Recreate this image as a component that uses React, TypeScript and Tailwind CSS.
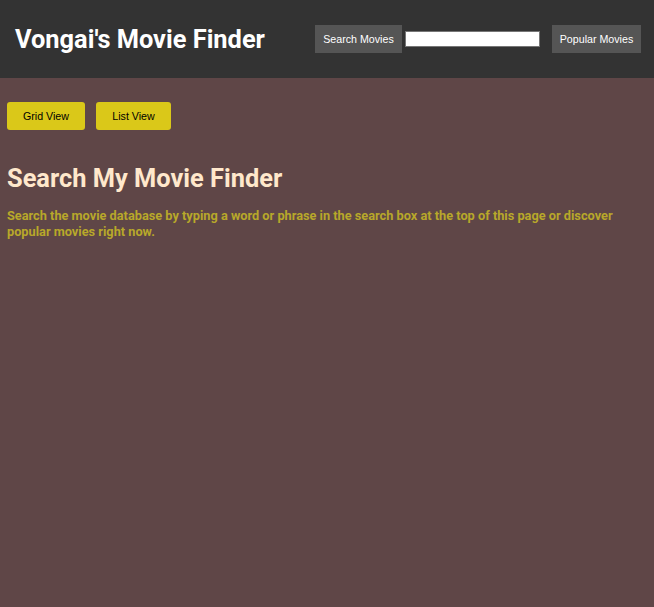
import React, { useState } from "react";

const App: React.FC = () => {
  const [query, setQuery] = useState("");

  return (
    <div className="min-h-[607px] bg-[#5f4647] font-['Roboto',sans-serif]">
      {/* header */}
      <header className="flex h-[78px] items-center justify-between bg-[#333333] pl-[15px] pr-[13px]">
        <h1 className="text-[25.4px] font-bold text-white">Vongai's Movie Finder</h1>
        <div className="flex items-center">
          <button className="h-[28px] w-[87px] bg-[#555555] font-['Liberation_Sans',sans-serif] text-[10.67px] text-white">
            Search Movies
          </button>
          <input
            value={query}
            onChange={(e) => setQuery(e.target.value)}
            className="ml-[3px] h-[16px] w-[135px] border border-[#767676] bg-white"
            aria-label="Search"
          />
          <button className="ml-[12px] h-[28px] w-[89px] bg-[#555555] font-['Liberation_Sans',sans-serif] text-[10.67px] text-white">
            Popular Movies
          </button>
        </div>
      </header>

      <main className="px-[7px] pt-[24px]">
        <div className="flex gap-[11px]">
          <button className="h-[28px] w-[78px] rounded-[3px] bg-[#dac819] font-['Liberation_Sans',sans-serif] text-[10.67px] text-black">
            Grid View
          </button>
          <button className="h-[28px] w-[75px] rounded-[3px] bg-[#dac819] font-['Liberation_Sans',sans-serif] text-[10.67px] text-black">
            List View
          </button>
        </div>

        <h2 className="mt-[29px] text-[25.4px] font-bold text-[#ffe8cc]">Search My Movie Finder</h2>
        <p className="mt-[11px] text-[12.75px] leading-[16px] font-bold text-[#b8a82a]">
          Search the movie database by typing a word or phrase in the search box at the top of this page or discover
          popular movies right now.
        </p>
      </main>
    </div>
  );
};

export default App;
